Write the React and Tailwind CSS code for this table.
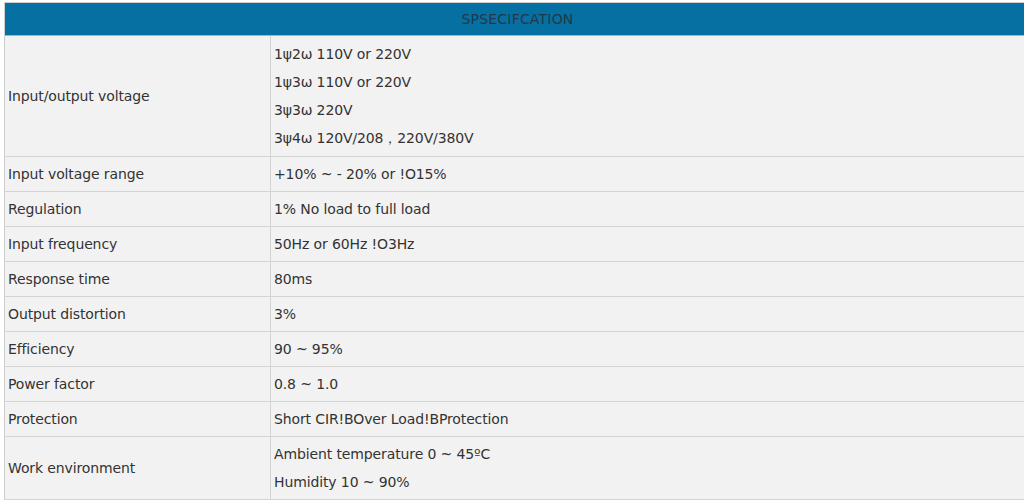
import React from "react";

const rows = [
  { label: "Input/output voltage", values: ["1ψ2ω 110V or 220V", "1ψ3ω 110V or 220V", "3ψ3ω 220V", "3ψ4ω 120V/208，220V/380V"], h: "h-[120px]" },
  { label: "Input voltage range", values: ["+10% ~ - 20% or !O15%"], h: "h-[34px]" },
  { label: "Regulation", values: ["1% No load to full load"], h: "h-[34px]" },
  { label: "Input frequency", values: ["50Hz or 60Hz !O3Hz"], h: "h-[34px]" },
  { label: "Response time", values: ["80ms"], h: "h-[34px]" },
  { label: "Output distortion", values: ["3%"], h: "h-[34px]" },
  { label: "Efficiency", values: ["90 ~ 95%"], h: "h-[34px]" },
  { label: "Power factor", values: ["0.8 ~ 1.0"], h: "h-[34px]" },
  { label: "Protection", values: ["Short CIR!BOver Load!BProtection"], h: "h-[34px]" },
  { label: "Work environment", values: ["Ambient temperature 0 ~ 45ºC", "Humidity 10 ~ 90%"], h: "h-[62px]" },
];

export default function App() {
  return (
    <div className="w-[1024px] h-[500px] overflow-hidden bg-white" style={{ fontFamily: '"DejaVu Sans", sans-serif' }}>
      <div className="mt-[2px] ml-[4px] w-[1026px] border-t border-l border-[#cfcfcf] text-[14px] tracking-[-0.12px] text-[#333333]">
        <div className="h-[33px] bg-[#0670a3] flex items-center justify-center text-[#22384a] tracking-[0.2px] border-b border-[#9ab8c8]">
          SPSECIFCATION
        </div>
        {rows.map((r, i) => (
          <div key={i} className="flex border-b border-[#d4d4d4] bg-[#f2f2f2]">
            <div className={`${r.h} w-[266px] shrink-0 border-r border-[#d4d4d4] flex items-center pl-[3px]`}>
              {r.label}
            </div>
            <div className={`${r.h} flex-1 flex flex-col justify-center pl-[3px]`}>
              {r.values.map((v, j) => (
                <div key={j} className="leading-[28px]">{v}</div>
              ))}
            </div>
          </div>
        ))}
      </div>
    </div>
  );
}
